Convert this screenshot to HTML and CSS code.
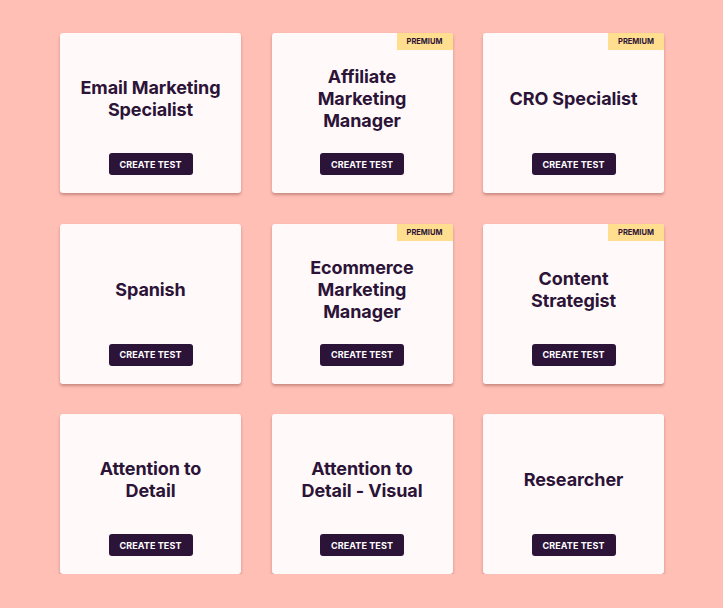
FILE: index.html
```html
<!DOCTYPE html>
<html>
<head>
<meta charset="utf-8">
<link rel="stylesheet" href="styles.css">
</head>
<body>
<div class="grid">
  <div class="card"><div class="title">Email Marketing<br>Specialist</div><button class="btn">CREATE TEST</button></div>
  <div class="card"><span class="badge">PREMIUM</span><div class="title">Affiliate<br>Marketing<br>Manager</div><button class="btn">CREATE TEST</button></div>
  <div class="card"><span class="badge">PREMIUM</span><div class="title">CRO Specialist</div><button class="btn">CREATE TEST</button></div>
  <div class="card"><div class="title">Spanish</div><button class="btn">CREATE TEST</button></div>
  <div class="card"><span class="badge">PREMIUM</span><div class="title">Ecommerce<br>Marketing<br>Manager</div><button class="btn">CREATE TEST</button></div>
  <div class="card"><span class="badge">PREMIUM</span><div class="title">Content<br>Strategist</div><button class="btn">CREATE TEST</button></div>
  <div class="card"><div class="title">Attention to<br>Detail</div><button class="btn">CREATE TEST</button></div>
  <div class="card"><div class="title">Attention to<br>Detail - Visual</div><button class="btn">CREATE TEST</button></div>
  <div class="card"><div class="title">Researcher</div><button class="btn">CREATE TEST</button></div>
</div>
</body>
</html>
```
FILE: styles.css
```css
html, body {
  margin: 0;
  padding: 0;
  background: #ffbfb5;
  font-family: "Inter", "Liberation Sans", sans-serif;
}
.grid {
  display: grid;
  grid-template-columns: repeat(3, 181px);
  grid-auto-rows: 160px;
  column-gap: 30.5px;
  row-gap: 30.5px;
  padding: 33px 0 0 60px;
}
.card {
  position: relative;
  background: #fffaf9;
  border-radius: 3px;
  box-shadow: 0 2px 3px rgba(120, 60, 55, 0.4);
  display: flex;
  flex-direction: column;
  align-items: center;
  padding: 12px 0 18px;
  box-sizing: border-box;
}
.title {
  flex: 1;
  display: flex;
  align-items: center;
  justify-content: center;
  text-align: center;
  font-size: 18px;
  font-weight: 700;
  line-height: 22px;
  color: #2c1338;
  letter-spacing: -0.1px;
}
.btn {
  width: 84px;
  height: 22px;
  border: none;
  border-radius: 3px;
  background: #2c1338;
  color: #fff;
  font-family: "Inter", "Liberation Sans", sans-serif;
  font-size: 9px;
  font-weight: 700;
  letter-spacing: 0.1px;
  padding: 0;
}
.badge {
  position: absolute;
  top: 0;
  right: 0;
  width: 56px;
  height: 17px;
  background: #ffdf8f;
  color: #2c1338;
  font-size: 7.5px;
  font-weight: 700;
  line-height: 17px;
  text-align: center;
  border-top-right-radius: 3px;
}
```
